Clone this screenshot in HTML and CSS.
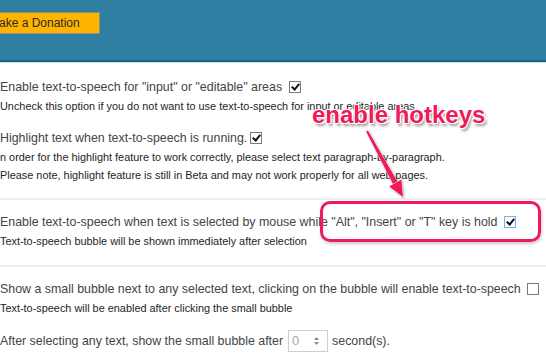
FILE: index.html
```html
<!DOCTYPE html>
<html lang="en">
<head>
    <meta charset="UTF-8">
    <title>Options</title>
    <link rel="stylesheet" href="styles.css">
</head>
<body>
    <div class="top">
        <span class="donate">Make a Donation</span>
    </div>

    <div class="section first">
        <div class="row">
            <div class="opt">Enable text-to-speech for "input" or "editable" areas <span class="cb on"></span></div>
            <div class="note">Uncheck this option if you do not want to use text-to-speech for input or editable areas</div>
        </div>
        <div class="row">
            <div class="opt">Highlight text when text-to-speech is running.<span class="cb on"></span></div>
            <div class="note shift">In order for the highlight feature to work correctly, please select text paragraph-by-paragraph.</div>
            <div class="note">Please note, highlight feature is still in Beta and may not work properly for all web-pages.</div>
        </div>
    </div>

    <div class="section">
        <div class="row">
            <div class="opt">Enable text-to-speech when text is selected by mouse while "Alt", "Insert" or "T" key is hold <span class="cb on focus"></span></div>
            <div class="note">Text-to-speech bubble will be shown immediately after selection</div>
        </div>
    </div>

    <div class="section">
        <div class="row">
            <div class="opt">Show a small bubble next to any selected text, clicking on the bubble will enable text-to-speech <span class="cb"></span></div>
            <div class="note">Text-to-speech will be enabled after clicking the small bubble</div>
        </div>
        <div class="row">
            <div class="opt inline">After selecting any text, show the small bubble after
                <span class="num">0
                    <svg class="spin" width="7" height="10" viewBox="0 0 7 10"><path d="M3.5 1 L6 4 H1 Z M3.5 9 L6 6 H1 Z" fill="#8a8a8a"/></svg>
                </span>
                second(s).</div>
        </div>
    </div>

    <!-- annotation drawn over the screenshot -->
    <div class="tag">enable hotkeys</div>
    <div class="ring"></div>
    <svg class="arrow" width="546" height="354" viewBox="0 0 546 354">
        <polygon points="366.1,131.5 367.9,130.5 397.5,181.8 393.1,184.2" fill="#f01a5a" stroke="#fff" stroke-width="0.8" paint-order="stroke"/>
        <polygon points="403,197 401.4,179.6 389.2,186.4" fill="#f01a5a" stroke="#fff" stroke-width="0.8" paint-order="stroke"/>
    </svg>
</body>
</html>
```

FILE: styles.css
```css
body {
    margin: 0;
    width: 546px;
    height: 354px;
    overflow: hidden;
    position: relative;
    background: #fff;
    font-family: "Liberation Sans", Arial, sans-serif;
    color: #444;
}

.top {
    height: 62px;
    padding-top: 12px;
    box-sizing: border-box;
    background: #2f7fa3;
    border-bottom: 2px solid #24617d;
    box-shadow: 0 1px 0 #c8dce6;
}

.donate {
    display: inline-block;
    margin-left: -31px;
    height: 22px;
    box-sizing: border-box;
    padding: 0 19px 0 19px;
    background: #ffb400;
    border: 1px solid #8f8f7a;
    font-size: 12px;
    line-height: 20px;
    color: #2a2a2a;
}

.section {
    padding: 12px 0 15px;
    border-top: 2px solid #eeeeee;
}

.section.first {
    padding: 15px 0 14px;
    border-top: none;
}

.row + .row {
    margin-top: 13px;
}

.opt {
    font-size: 12.4px;
    line-height: 20px;
    white-space: nowrap;
}

.note {
    font-size: 10.9px;
    line-height: 18px;
    color: #1e1e1e;
    white-space: nowrap;
}

.note.shift {
    text-indent: -3px;
}

.cb {
    display: inline-block;
    width: 12px;
    height: 12px;
    box-sizing: border-box;
    margin-left: 3px;
    vertical-align: -2px;
    border: 1px solid #7a7a7a;
    background: #fff;
    position: relative;
}

.cb.on::after {
    content: "";
    position: absolute;
    left: 3px;
    top: 0px;
    width: 3px;
    height: 6px;
    border: solid #111;
    border-width: 0 2px 2px 0;
    transform: rotate(40deg);
}

.cb.focus {
    border-color: #78b0e8;
}

.opt.inline {
    display: flex;
    align-items: center;
    gap: 4px;
    height: 22px;
}

.num {
    display: inline-flex;
    align-items: center;
    justify-content: space-between;
    width: 40px;
    height: 22px;
    box-sizing: border-box;
    padding: 0 7px 0 3px;
    border: 1px solid #cfcfcf;
    color: #aaa;
    font-size: 13px;
    margin-left: 1px;
}

.tag {
    position: absolute;
    left: 312px;
    top: 103px;
    font-size: 24px;
    line-height: 24px;
    font-weight: bold;
    color: #f01a5a;
    white-space: nowrap;
    text-shadow: -1px -1px 0 #fff, 1px -1px 0 #fff, -1px 1px 0 #fff, 1px 1px 0 #fff,
        2px 3px 3px rgba(0, 0, 0, 0.45);
}

.ring {
    position: absolute;
    left: 320px;
    top: 201px;
    width: 221px;
    height: 41px;
    box-sizing: border-box;
    border: 3px solid #f01a5a;
    border-radius: 10px;
    box-shadow: 1px 2px 3px rgba(0, 0, 0, 0.2);
}

.arrow {
    position: absolute;
    left: 0;
    top: 0;
    pointer-events: none;
    filter: drop-shadow(1px 1px 1px rgba(0, 0, 0, 0.3));
}
```
